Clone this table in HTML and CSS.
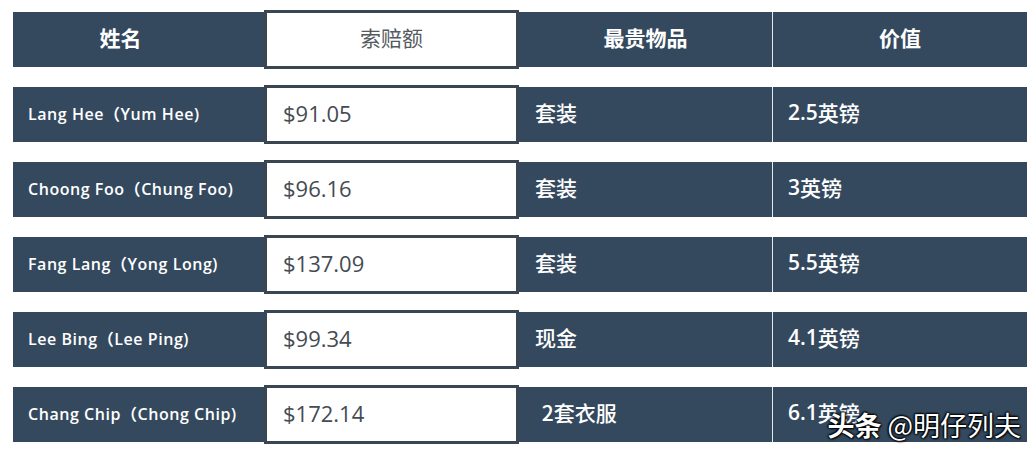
FILE: index.html
```html
<!DOCTYPE html>
<html lang="zh-CN">
<head>
<meta charset="utf-8">
<title>索赔额</title>
<link rel="stylesheet" href="styles.css">
</head>
<body>
<div class="table">
  <div class="row head">
    <div class="cell c1">姓名</div>
    <div class="cell c2">索赔额</div>
    <div class="cell c3">最贵物品</div>
    <div class="cell c4">价值</div>
  </div>
  <div class="row">
    <div class="cell c1">Lang Hee（Yum Hee)</div>
    <div class="cell c2">$91.05</div>
    <div class="cell c3">套装</div>
    <div class="cell c4"><span class="num">2.5</span>英镑</div>
  </div>
  <div class="row">
    <div class="cell c1">Choong Foo（Chung Foo)</div>
    <div class="cell c2">$96.16</div>
    <div class="cell c3">套装</div>
    <div class="cell c4"><span class="num">3</span>英镑</div>
  </div>
  <div class="row">
    <div class="cell c1">Fang Lang（Yong Long)</div>
    <div class="cell c2">$137.09</div>
    <div class="cell c3">套装</div>
    <div class="cell c4"><span class="num">5.5</span>英镑</div>
  </div>
  <div class="row">
    <div class="cell c1">Lee Bing（Lee Ping)</div>
    <div class="cell c2">$99.34</div>
    <div class="cell c3">现金</div>
    <div class="cell c4"><span class="num">4.1</span>英镑</div>
  </div>
  <div class="row">
    <div class="cell c1">Chang Chip（Chong Chip)</div>
    <div class="cell c2">$172.14</div>
    <div class="cell c3 lead"> 2套衣服</div>
    <div class="cell c4"><span class="num">6.1</span>英镑</div>
  </div>
</div>
<div class="watermark"><span class="wm-bold">头条</span> @明仔列夫</div>
</body>
</html>
```

FILE: styles.css
```css
html, body {
  margin: 0;
  padding: 0;
  background: #ffffff;
}

body {
  font-family: "Open Sans", "Noto Sans CJK SC", sans-serif;
  position: relative;
  width: 1035px;
  height: 457px;
  overflow: hidden;
}

.table {
  display: flex;
  flex-direction: column;
  gap: 20px;
  padding: 12px 0 0 13px;
  width: 1014px;
}

.row {
  display: flex;
  align-items: center;
  height: 55px;
  background: #34495e;
  color: #ffffff;
}

.cell {
  box-sizing: border-box;
  display: flex;
  align-items: center;
  height: 55px;
  padding-bottom: 4px;
  white-space: pre;
}

.c1 {
  width: 251px;
  padding-left: 15px;
  font-size: 16px;
  font-weight: 600;
  letter-spacing: 0.55px;
}

.c2 {
  width: 255px;
  height: 59px;
  background: #ffffff;
  border: 3px solid #3a4752;
  padding-left: 16px;
  color: #454b52;
  font-size: 22px;
}

.c3 {
  width: 253px;
  padding-left: 16px;
  padding-bottom: 6px;
  font-family: "Noto Sans CJK SC", sans-serif;
  font-size: 21px;
  font-weight: 500;
}

.c3.lead {
  padding-left: 18px;
}

.c4 {
  width: 255px;
  border-left: 1px solid #e4e9ee;
  padding-left: 15px;
  padding-bottom: 6px;
  font-family: "Noto Sans CJK SC", sans-serif;
  font-size: 21px;
  font-weight: 500;
}

.num {
  font-family: "Open Sans", sans-serif;
  font-weight: 600;
}

.head .cell {
  justify-content: center;
  padding-left: 0;
  padding-bottom: 6px;
  font-family: "Noto Sans CJK SC", sans-serif;
  font-size: 21px;
  font-weight: 700;
}

.head .c1 {
  padding-right: 36px;
  letter-spacing: 0;
}

.head .c2 {
  font-weight: 400;
  color: #555a60;
}

.watermark {
  position: absolute;
  right: 14px;
  top: 405px;
  font-family: "Noto Sans CJK SC", sans-serif;
  font-size: 27px;
  color: #ffffff;
  text-shadow: 0 0 2px #000, 1px 1px 2px #000, -1px 0 2px #000, 0 -1px 2px #000;
  white-space: pre;
}

.wm-bold {
  font-weight: 700;
}
```
